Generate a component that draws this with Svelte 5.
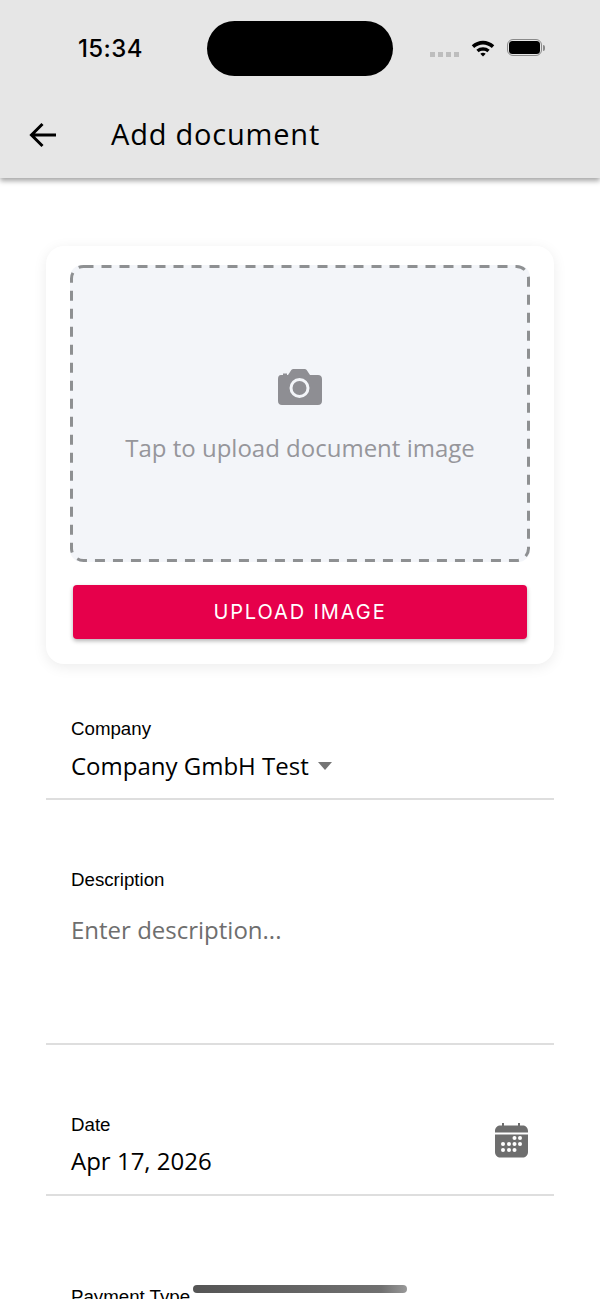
<script>
  const fields = [
    { label: 'Company', value: 'Company GmbH Test', kind: 'select' },
    { label: 'Description', value: 'Enter description...', kind: 'textarea' },
    { label: 'Date', value: 'Apr 17, 2026', kind: 'date' },
  ];
</script>

<div class="screen">
  <header class="header">
    <div class="status-bar">
      <span class="time">15:34</span>
      <div class="island"></div>
      <div class="status-icons">
        <div class="signal"><i></i><i></i><i></i><i></i></div>
        <svg class="wifi" width="24" height="18" viewBox="0 0 26 20">
          <path d="M.5 7C7.800.2 18.200.2 25.500 7L22.800 9.900C17 4.700 9 4.700 3.200 9.900Z" fill="#000" />
          <path d="M5.600 12C10 8.300 16 8.300 20.400 12L17.800 14.700C15 12.500 11 12.500 8.200 14.700Z" fill="#000" />
          <path d="M10 16.300C12 14.900 14 14.900 16 16.300L13 19.500Z" fill="#000" />
        </svg>
        <div class="battery"><div class="battery-fill"></div></div>
        <div class="battery-cap"></div>
      </div>
    </div>
    <div class="toolbar">
      <svg class="back" width="28" height="26" viewBox="0 0 28 26">
        <path d="M27 13H3M13.500 2 2.500 13l11 11" fill="none" stroke="#000" stroke-width="3" />
      </svg>
      <h1 class="title">Add document</h1>
    </div>
  </header>

  <main class="content">
    <section class="card">
      <div class="dropzone">
        <svg class="dashes" width="460" height="297">
          <rect x="1.500" y="1.500" width="457" height="294" rx="12" fill="none" stroke="#8e9092" stroke-width="3" stroke-dasharray="10 8" />
        </svg>
        <svg class="camera" width="44" height="36" viewBox="0 0 44 36">
          <path
            fill-rule="evenodd"
            fill="#8e8e93"
            d="M3 6H5V4.500H9V6H10L13 1.500C13.600.5 14.500 0 15.500 0H26.500C27.500 0 28.400.5 29 1.500L32 6H40C42.500 6 44 7.500 44 10V32C44 34.500 42.500 36 40 36H4C1.500 36 0 34.500 0 32V10C0 7.500 1 6 3 6ZM21.500 9A10 10 0 1 0 21.500 29A10 10 0 1 0 21.500 9ZM21.500 12A7 7 0 1 1 21.500 26A7 7 0 1 1 21.500 12Z"
          />
        </svg>
        <span class="hint">Tap to upload document image</span>
      </div>
      <button class="upload">UPLOAD IMAGE</button>
    </section>

    {#each fields as field}
      <div class="field {field.kind}">
        <label class="label" for={field.kind}>{field.label}</label>
        <div class="value-row" id={field.kind}>
          <span class="value">{field.value}</span>
          {#if field.kind === 'select'}
            <span class="caret"></span>
          {/if}
        </div>
        {#if field.kind === 'date'}
          <svg class="calendar" width="34" height="36" viewBox="0 0 34 36">
            <path fill="#6e6e6e" d="M8 1h2v2.500h14V1h2v2.500h2.500C31.500 3.500 34 5.500 34 9v1.500H1V9c0-3.500 2.500-5.500 5.500-5.500H8ZM1 12.500h33V30c0 3.500-2.500 5.500-5.500 5.500h-22C3.500 35.500 1 33.500 1 30Z" />
            <g fill="#fff">
              <circle cx="20.500" cy="16" r="2" /><circle cx="26" cy="16" r="2" />
              <circle cx="9" cy="22" r="2" /><circle cx="15" cy="22" r="2" /><circle cx="20.500" cy="22" r="2" /><circle cx="26" cy="22" r="2" />
              <circle cx="9" cy="28" r="2" /><circle cx="15" cy="28" r="2" /><circle cx="20.500" cy="28" r="2" />
            </g>
          </svg>
        {/if}
      </div>
    {/each}

    <div class="field payment">
      <span class="label">Payment Type</span>
    </div>
  </main>

  <div class="home-bar"></div>
</div>

<style>
  :global(body) {
    background: #fff;
  }

  .screen {
    position: relative;
    height: 1299px;
    overflow: hidden;
    background: #fff;
    font-family: "Open Sans", sans-serif;
    color: #000;
  }

  .header {
    height: 178px;
    background: #e6e6e6;
    box-shadow: 0 3px 5px rgba(0, 0, 0, 0.35);
    display: flex;
    flex-direction: column;
  }

  .status-bar {
    height: 96px;
    display: flex;
    align-items: center;
    padding: 0 0 0 78px;
  }

  .time {
    width: 129px;
    font-family: Inter, sans-serif;
    font-size: 24px;
    font-weight: 500;
    letter-spacing: 0.4px;
    line-height: 1;
    margin-top: 1px;
  }

  .island {
    width: 186px;
    height: 55px;
    margin-top: 1px;
    border-radius: 28px;
    background: #000;
  }

  .status-icons {
    display: flex;
    align-items: center;
    margin-left: 37px;
    margin-top: -1px;
  }

  .signal {
    display: flex;
    gap: 3px;
    margin-top: 13px;
    margin-right: 12px;
  }

  .signal i {
    width: 5px;
    height: 5px;
    background: #bdbdbd;
  }

  .wifi {
    margin-right: 12px;
  }

  .battery {
    width: 31px;
    height: 13px;
    padding: 1px;
    border: 1.500px solid #8a8a8a;
    border-radius: 6px;
    box-sizing: content-box;
  }

  .battery-fill {
    width: 100%;
    height: 100%;
    background: #000;
    border-radius: 3.500px;
  }

  .battery-cap {
    width: 2px;
    height: 6px;
    margin-left: 1px;
    background: #8a8a8a;
    border-radius: 0 2px 2px 0;
  }

  .toolbar {
    flex: 1;
    display: flex;
    align-items: center;
    padding-left: 29px;
    padding-bottom: 8px;
    gap: 54px;
  }

  .back {
    margin-top: 4px;
  }

  .title {
    margin: 0;
    font-size: 29px;
    font-weight: 400;
    letter-spacing: 0.8px;
    line-height: 1;
  }

  .content {
    padding: 68px 46px 0;
    display: flex;
    flex-direction: column;
  }

  .card {
    height: 418px;
    box-sizing: border-box;
    padding: 19px 24px 0;
    border-radius: 18px;
    background: #fff;
    box-shadow: 0 3px 14px rgba(0, 0, 0, 0.08);
    display: flex;
    flex-direction: column;
    align-items: center;
  }

  .dropzone {
    position: relative;
    width: 100%;
    height: 297px;
    box-sizing: border-box;
    padding-top: 6px;
    border-radius: 12px;
    background: #f3f5f9;
    display: flex;
    flex-direction: column;
    align-items: center;
    justify-content: center;
    gap: 27px;
  }

  .dashes {
    position: absolute;
    left: 0;
    top: 0;
  }

  .hint {
    font-size: 24px;
    line-height: 32px;
    color: #96969b;
  }

  .upload {
    width: 454px;
    height: 54px;
    margin-top: 23px;
    border: none;
    border-radius: 4px;
    background: #e6004b;
    color: #fff;
    box-shadow: 0 2px 4px rgba(0, 0, 0, 0.3);
    font-family: Inter, sans-serif;
    font-size: 20px;
    letter-spacing: 1.900px;
  }

  .field {
    position: relative;
    box-sizing: border-box;
    padding: 0 24px 0 25px;
    border-bottom: 2px solid #dedede;
    display: flex;
    flex-direction: column;
  }

  .select {
    margin-top: 54px;
    height: 82px;
  }

  .textarea {
    margin-top: 69px;
    height: 176px;
  }

  .date {
    margin-top: 69px;
    height: 82px;
  }

  .payment {
    margin-top: 90px;
    border-bottom: none;
  }

  .label {
    font-family: "Liberation Sans", sans-serif;
    font-size: 18.700px;
    line-height: 22px;
    color: #000;
  }

  .value-row {
    display: flex;
    align-items: center;
    gap: 9px;
    margin-top: 10px;
  }

  .value {
    font-size: 24px;
    line-height: 32px;
  }

  .textarea .value-row {
    margin-top: 23px;
  }

  .textarea .value {
    color: #6e6e6e;
  }

  .date .value-row {
    margin-top: 9px;
  }

  .caret {
    width: 0;
    height: 0;
    margin-top: 0;
    border-left: 7.500px solid transparent;
    border-right: 7.500px solid transparent;
    border-top: 8px solid #757575;
  }

  .calendar {
    position: absolute;
    right: 26px;
    top: 8px;
  }

  .home-bar {
    position: absolute;
    left: 193px;
    bottom: 6px;
    width: 214px;
    height: 8px;
    border-radius: 4px;
    background: linear-gradient(90deg, #555, #707070 88%, #999);
  }
</style>
